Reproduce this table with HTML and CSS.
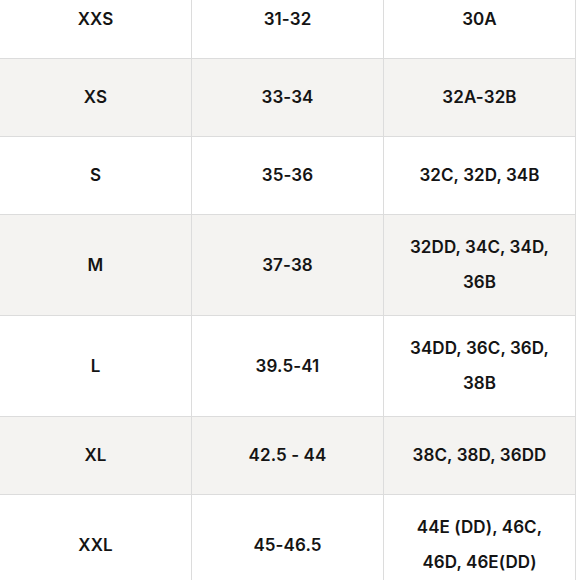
FILE: index.html
```html
<!DOCTYPE html>
<html lang="en">
<head>
<meta charset="utf-8">
<title>Size chart</title>
<link rel="stylesheet" href="styles.css">
</head>
<body>
<div class="wrap">
<table class="chart">
  <colgroup><col class="c"><col class="c"><col class="c"></colgroup>
  <tbody>
    <tr><td>XXS</td><td>31-32</td><td>30A</td></tr>
    <tr class="alt"><td>XS</td><td>33-34</td><td>32A-32B</td></tr>
    <tr><td>S</td><td>35-36</td><td>32C, 32D, 34B</td></tr>
    <tr class="alt"><td>M</td><td>37-38</td><td>32DD, 34C, 34D,<br>36B</td></tr>
    <tr><td>L</td><td>39.5-41</td><td>34DD, 36C, 36D,<br>38B</td></tr>
    <tr class="alt"><td>XL</td><td>42.5 - 44</td><td>38C, 38D, 36DD</td></tr>
    <tr><td>XXL</td><td>45-46.5</td><td>44E (DD), 46C,<br>46D, 46E(DD)</td></tr>
  </tbody>
</table>
</div>
</body>
</html>
```

FILE: styles.css
```css
html, body {
  margin: 0;
  padding: 0;
  background: #ffffff;
}
body {
  font-family: Inter, "Noto Sans", sans-serif;
  color: #141414;
  overflow: hidden;
}
.wrap {
  margin-top: -20px;
  margin-left: -1px;
  width: 577px;
}
.chart {
  width: 577px;
  border-collapse: collapse;
  table-layout: fixed;
}
.chart .c {
  width: 192px;
}
.chart td {
  border: 1px solid #dcdcdc;
  height: 78px;
  padding: 15px 10px;
  box-sizing: border-box;
  text-align: center;
  vertical-align: middle;
  font-size: 17px;
  font-weight: 600;
  letter-spacing: 0.1px;
  line-height: 35px;
}
.chart tr.alt td {
  background: #f4f3f1;
}
```
